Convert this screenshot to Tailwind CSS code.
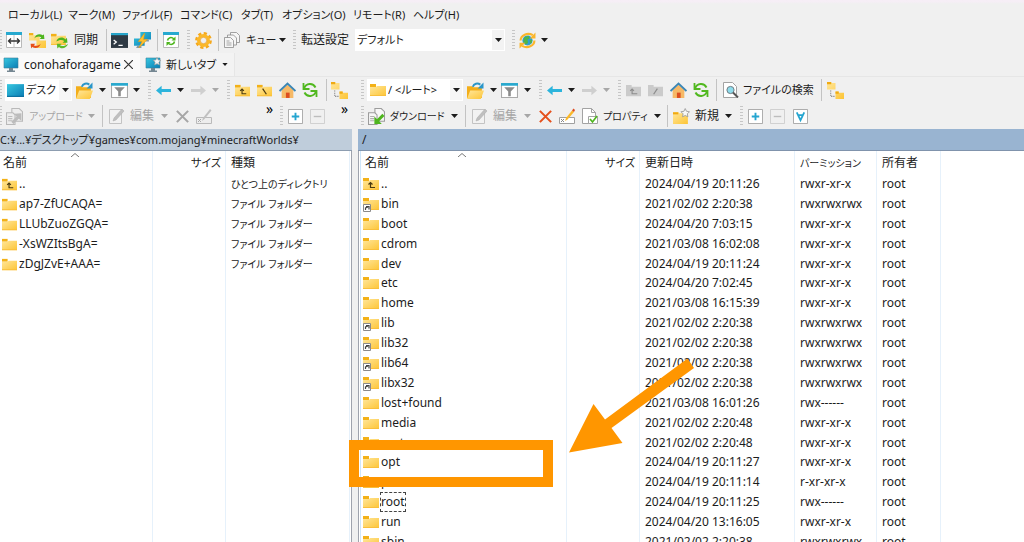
<!DOCTYPE html>
<html lang="ja">
<head>
<meta charset="utf-8">
<title>conohaforagame - WinSCP</title>
<script src="https://cdn.jsdelivr.net/npm/@tailwindcss/browser@4"></script>
</head>
<body class="h-screen overflow-hidden bg-[#f0f0f0] font-['Noto_Sans','Noto_Sans_CJK_JP',sans-serif] text-[12px] leading-[18px] text-[#1c1c1c] [font-feature-settings:'palt']">
<svg class="absolute size-0" aria-hidden="true">
  <linearGradient id="gold" x1="0" y1="0" x2="1" y2="1"><stop offset="0" stop-color="#ffe69a"/><stop offset="1" stop-color="#fdc536"/></linearGradient>
  <linearGradient id="screen" x1="0" y1="0" x2="1" y2="1"><stop offset="0" stop-color="#37c8e0"/><stop offset="1" stop-color="#0b7cb4"/></linearGradient>
  <symbol id="folder" viewBox="0 0 16 16"><path d="M0 2h6v3H0z" fill="#f3b117"/><path d="M0 5h6l1-1h9v10H0z" fill="url(#gold)"/><path d="M0 13h16v1H0z" fill="#f9bf3c"/></symbol>
  <symbol id="folder-up" viewBox="0 0 16 16"><use href="#folder"/><path d="M7.500 7v4.500H12M5.500 8.500l2-2 2 2" fill="none" stroke="#4a3a10" stroke-width="1.200"/></symbol>
  <symbol id="folder-root" viewBox="0 0 16 16"><use href="#folder"/><path d="M6 6l4 6" stroke="#4a3a10" stroke-width="1.300"/></symbol>
  <symbol id="folder-link" viewBox="0 0 16 16"><use href="#folder"/><path d="M.5 8.500h7v7h-7z" fill="#fff" stroke="#8a8a8a"/><path d="M2.500 14v-2l2.500-1M3 10.500h3v3" fill="none" stroke="#444" stroke-width="1.200"/></symbol>
  <symbol id="folder-up-off" viewBox="0 0 16 16"><path d="M0 2h6v2h10v10H0z" fill="#cbcbcb"/><path d="M6.500 7v4.500H12M4.500 8.500l2-2 2 2" fill="none" stroke="#8c8c8c" stroke-width="1.200"/></symbol>
  <symbol id="folder-root-off" viewBox="0 0 16 16"><path d="M0 2h6v2h10v10H0z" fill="#cbcbcb"/><path d="M10 6l-4 6" stroke="#8c8c8c" stroke-width="1.300"/></symbol>
  <symbol id="panels" viewBox="0 0 16 16"><path d="M.5.500h15v15H.5z" fill="#fff" stroke="#b9b9b9"/><path d="M0 0h16v3H0z" fill="#27a9cf"/><path d="M8 3v13" stroke="#c4c4c4"/><path d="M2.500 9h11M5 6.500L2.500 9 5 11.500M11 6.500L13.500 9 11 11.500" fill="none" stroke="#333" stroke-width="1.300"/></symbol>
  <symbol id="compare" viewBox="0 0 16 16"><path d="M0 1h4v2h6v5H0zM7 8h9v7H7z" fill="url(#gold)"/><path d="M0 1h4v2H0z" fill="#f3b117"/><path d="M5 6c1-4 5-5 8-3l1-1 .5 4.500H10l1.500-1.500C9 3.500 7 4.500 5 6z" fill="#4eb51e"/><path d="M11 11c-1 4-5 5-8 3l-1 1.500L1.500 11H6l-1.500 1.500c2 1 4.500.5 6.500-1.500z" fill="#e64f19"/></symbol>
  <symbol id="sync" viewBox="0 0 16 16"><use href="#folder" width="14" height="14"/><path d="M5 9c1-4 6-5 8.500-2L15 5.500 15.500 10H11l1.500-1.500C10.500 7 8 7 5 9z" fill="#4eb51e"/><path d="M16 11c-1 4-6 5.500-8.500 3L6 15.500 5.500 11H10l-1.500 1.500c2 1.500 5 .5 7.500-1.500z" fill="#5dbb2b"/></symbol>
  <symbol id="terminal" viewBox="0 0 16 16"><path d="M0 1h16v14H0z" fill="#2f3a44"/><path d="M0 1h16v2H0z" fill="#27a9cf"/><path d="M2.500 7.500L5 9.500l-2.500 2M7 12.500h4" fill="none" stroke="#fff" stroke-width="1.200"/></symbol>
  <symbol id="putty" viewBox="0 0 16 16"><path d="M6 0h10v7H6zM0 6h10v7H0z" fill="url(#screen)"/><path d="M9 7h5v2H9zM3 13h4v2H2z" fill="#8299a6"/><path d="M10 1L4 9h3.500L4.500 15 12.500 7H9z" fill="#ffc02e" stroke="#e79c0b" stroke-width=".5"/></symbol>
  <symbol id="refresh-win" viewBox="0 0 16 16"><path d="M.5.500h15v15H.5z" fill="#fff" stroke="#b9b9b9"/><path d="M0 0h16v3H0z" fill="#27a9cf"/><path d="M4.500 8.500c.5-3 4-4 6.500-1.500M11.500 9.500c-.5 3-4 4-6.500 1.500" fill="none" stroke="#4eb51e" stroke-width="1.600"/><path d="M12.500 4.500v4h-4zM3.500 14v-4h4z" fill="#4eb51e"/></symbol>
  <symbol id="gear" viewBox="0 0 16 16"><circle cx="8" cy="8" r="6.700" fill="none" stroke="#f5a81c" stroke-width="2.400" stroke-dasharray="3 2.260"/><circle cx="8" cy="8" r="4.600" fill="#f0f0f0" stroke="#fbb829" stroke-width="3"/><circle cx="8" cy="8" r="3" fill="none" stroke="#e9991a" stroke-width=".6"/></symbol>
  <symbol id="queue" viewBox="0 0 16 16"><g fill="#f6f6f6" stroke="#8b8b8b" stroke-width=".8"><path d="M6.500.500h6l3 3v7h-9z"/><path d="M3.500 3h6l3 3v7h-9z"/><path d="M.5 5.500h6l3 3v7h-9z"/></g><path d="M2.500 9h3M2.500 11h5M2.500 13h5" stroke="#a5a5a5"/></symbol>
  <symbol id="globe" viewBox="0 0 16 16"><circle cx="8" cy="8" r="4.800" fill="#2d9fd3"/><path d="M5 5l4-1.500 1 2.500-2 1 .5 3-2 2L4 9zM10 8l2.500-1-.5 3-1.500 1z" fill="#51b548"/><path d="M1.500 8C1.500 3 8 0 13 3M14.500 8c0 5-6.500 8-11.500 5" fill="none" stroke="#fbb62c" stroke-width="2"/><path d="M15.500.500V6H10zM.5 15.500V10H6z" fill="#fbb62c"/></symbol>
  <symbol id="monitor" viewBox="0 0 16 16"><path d="M1 1h14v10H1z" fill="url(#screen)" stroke="#3b7f9c" stroke-width=".6"/><path d="M6 11h4v2.500h2V15H4v-1.500h2z" fill="#758792"/></symbol>
  <symbol id="monitor-new" viewBox="0 0 16 16"><use href="#monitor"/><path d="M12 .5l1.200 2.400 2.600.4-1.900 1.900.5 2.700L12 6.700 9.600 7.900l.5-2.700-1.900-1.900 2.600-.4z" fill="#f5f5f5" stroke="#9a9a9a" stroke-width=".7"/></symbol>
  <symbol id="desktop" viewBox="0 0 16 16"><path d="M0 2h16v12H0z" fill="url(#screen)"/><path d="M0 13h16v1H0z" fill="#0a6c9b"/></symbol>
  <symbol id="open" viewBox="0 0 16 16"><path d="M0 4h5l1 1h8v10H0z" fill="#f3ae1a"/><path d="M3 8h13l-3 8H0z" fill="url(#gold)"/><path d="M5.500 4.500C6.500 1.500 10 .5 12.500 2.500" fill="none" stroke="#2a96c9" stroke-width="1.900"/><path d="M15.500.500v5.500H10z" fill="#2a96c9"/></symbol>
  <symbol id="filter" viewBox="0 0 16 16"><path d="M.5 1.500h15v13H.5z" fill="#fff" stroke="#a9a9a9"/><path d="M0 1h16v2.500H0z" fill="#27a9cf"/><path d="M3 5h10L9.200 9v4.500H6.800V9z" fill="#8b8b8b"/></symbol>
  <symbol id="back" viewBox="0 0 16 16"><path d="M0 8l6-5v3.500h10v3H6V13z" fill="#2cb4dc"/></symbol>
  <symbol id="forward" viewBox="0 0 16 16"><path d="M16 8l-6-5v3.500H0v3h10V13z" fill="#cfcfcf"/></symbol>
  <symbol id="home" viewBox="0 0 16 16"><path d="M2.500 7.500L8 2.500l5.500 5V15h-11z" fill="#f6b967"/><path d="M6.500 10h3.500v5H6.500z" fill="#dc4d20"/><path d="M.5 8.500L8 1.500l7.500 7" fill="none" stroke="#3b86b5" stroke-width="1.800"/></symbol>
  <symbol id="refresh" viewBox="0 0 16 16"><path d="M2 6.500C4 1 11 .5 13.500 5.500M14 9.500C12 15 5 15.500 2.500 10.500" fill="none" stroke="#51b81f" stroke-width="1.900"/><path d="M1.500 1v6h6M14.500 15V9h-6" fill="none" stroke="#51b81f" stroke-width="1.800"/></symbol>
  <symbol id="tree" viewBox="0 0 16 16"><path d="M0 0h4v1h4v6H0zM8 9h3v1h5v6H8z" fill="url(#gold)"/><path d="M0 0h4v2H0zM8 9h3v2H8z" fill="#f0aa12"/><path d="M3.500 8v5.500H8" fill="none" stroke="#777" stroke-dasharray="1 1"/></symbol>
  <symbol id="upload" viewBox="0 0 16 16"><g fill="#ededed" stroke="#b9b9b9"><path d="M5.500.500h7l3 3v9h-10z"/><path d="M.5 4.500h6l2 2v9h-8z"/></g><path d="M2 8h4M2 10h4M2 12h4" stroke="#bdbdbd"/><path d="M14.500 5v7l-2.500-2-5 5-2-2 5-5-2.500-2.500z" fill="#bcbcbc"/></symbol>
  <symbol id="download" viewBox="0 0 16 16"><g fill="#f7f7f7" stroke="#9c9c9c"><path d="M6.500.500h6l3 3v9h-9z"/><path d="M.5 4.500h6l2 2v9h-8z"/></g><path d="M2 8h4M2 10h4M2 12h4" stroke="#b0b0b0"/><path d="M6 15V8l2.500 2.500 5-5 2 2-5 5L13 15z" fill="#4eb51e"/></symbol>
  <symbol id="edit" viewBox="0 0 16 16"><path d="M.5 1.500h12v14H.5z" fill="#f2f2f2" stroke="#c3c3c3"/><path d="M4 13l1-3 8-9 2 2-8 9z" fill="#bfbfbf" stroke="#aaa" stroke-width=".5"/></symbol>
  <symbol id="cross" viewBox="0 0 16 16"><path d="M2 2l12 12M14 2L2 14" stroke="currentColor" stroke-width="2.200"/></symbol>
  <symbol id="rename-off" viewBox="0 0 16 16"><path d="M.5 9.500h15v6H.5z" fill="#ededed" stroke="#bababa"/><path d="M2 11l3 3m0-3l-3 3" stroke="#aaa"/><path d="M6 13l1-3 7-9 1.500 1.500-7 8.500z" fill="#c0c0c0"/></symbol>
  <symbol id="rename" viewBox="0 0 16 16"><path d="M.5 9.500h15v6H.5z" fill="#fff" stroke="#a0a0a0"/><path d="M2 11l3 3m0-3l-3 3" stroke="#888"/><path d="M6 13l1-3 6-7.500L15 4l-6.500 7.500z" fill="#fbb829"/><path d="M13 2.500L14.500 .5 16 2l-1 2z" fill="#dd4b20"/></symbol>
  <symbol id="props" viewBox="0 0 16 16"><path d="M.5.500h9l4 4v11H.5z" fill="#fff" stroke="#a3a3a3"/><path d="M9.500.500v4h4" fill="none" stroke="#a3a3a3"/><path d="M6.500 8.500h9v7h-9z" fill="#fff" stroke="#a3a3a3"/><path d="M8 11l2.500 3L15 8" fill="none" stroke="#4eb51e" stroke-width="1.700"/></symbol>
  <symbol id="new" viewBox="0 0 16 16"><path d="M0 4h5l1 1h8v10H0z" fill="url(#gold)"/><path d="M0 4h5v2H0z" fill="#f0aa12"/><path d="M11.500.500l1.200 2.600 2.800.4-2 2 .5 2.800-2.500-1.300L9 8.300l.5-2.800-2-2 2.800-.4z" fill="#f7f7f7" stroke="#999" stroke-width=".8"/></symbol>
  <symbol id="search" viewBox="0 0 16 16"><path d="M.5.500h9l4 4v11H.5z" fill="#fff" stroke="#a3a3a3"/><circle cx="7.500" cy="8" r="3.600" fill="#8edcec" stroke="#6f7d84"/><path d="M10 10.500l5 5" stroke="#555" stroke-width="2"/></symbol>
  <symbol id="plus" viewBox="0 0 16 16"><path d="M.5.500h15v15H.5z" fill="#fff" stroke="#a5a5a5"/><path d="M8 4v8M4 8h8" stroke="#25a5d0" stroke-width="2"/></symbol>
  <symbol id="minus" viewBox="0 0 16 16"><path d="M.5.500h15v15H.5z" fill="#f0f0f0" stroke="#cdcdcd"/><path d="M4 8h8" stroke="#bdbdbd" stroke-width="1.500"/></symbol>
  <symbol id="select-filter" viewBox="0 0 16 16"><path d="M.5.500h15v15H.5z" fill="#fff" stroke="#a5a5a5"/><path d="M4 3.500L8 12l4-8.500M5.500 6.500h5" fill="none" stroke="#25a5d0" stroke-width="1.900"/></symbol>
  <symbol id="arrow" viewBox="0 0 7 4"><path d="M0 0h7L3.500 4z" fill="currentColor"/></symbol>
</svg>

<div class="relative flex h-full flex-col">
  <nav class="flex h-[27px] shrink-0 items-center bg-linear-to-b from-[#f6eef6] from-5% to-[#f0f0f0] to-15% pt-[3px] pl-2 text-[11px] whitespace-nowrap" aria-label="メニュー">
    <button class="w-[60px] text-left">ローカル(L)</button>
    <button class="w-[54px] text-left">マーク(M)</button>
    <button class="w-[58px] text-left">ファイル(F)</button>
    <button class="w-[61px] text-left">コマンド(C)</button>
    <button class="w-[41px] text-left">タブ(T)</button>
    <button class="w-[71px] text-left">オプション(O)</button>
    <button class="w-[60px] text-left">リモート(R)</button>
    <button class="text-left">ヘルプ(H)</button>
  </nav>

  <div class="flex h-[26px] shrink-0 items-center whitespace-nowrap" role="toolbar" aria-label="メイン">
    <span class="w-[6px]"><i class="block h-5 w-[2px] bg-[repeating-linear-gradient(#c6c6c6_0_1px,transparent_1px_3px)]"></i></span>
    <button class="w-[23px]" aria-label="パネル"><svg class="size-4"><use href="#panels"/></svg></button>
    <button class="w-[22px]" aria-label="比較"><svg class="size-[17px]"><use href="#compare"/></svg></button>
    <button class="flex w-[55px] items-center gap-[6px]"><svg class="size-[17px]"><use href="#sync"/></svg>同期</button>
    <span class="h-[22px] w-[5px] border-l border-[#c3c3c3]"></span>
    <button class="w-[23px]" aria-label="端末"><svg class="size-[17px]"><use href="#terminal"/></svg></button>
    <button class="w-[23px]" aria-label="PuTTY"><svg class="size-[17px]"><use href="#putty"/></svg></button>
    <span class="h-[22px] w-[6px] border-l border-[#c3c3c3]"></span>
    <button class="w-[24px]" aria-label="更新"><svg class="size-4"><use href="#refresh-win"/></svg></button>
    <span class="w-[8px]"><i class="block h-5 w-[3px] bg-[repeating-linear-gradient(#c6c6c6_0_1px,transparent_1px_3px)]"></i></span>
    <button class="w-[23px]" aria-label="環境設定"><svg class="size-[17px]"><use href="#gear"/></svg></button>
    <span class="h-[22px] w-[6px] border-l border-[#c3c3c3]"></span>
    <button class="flex w-[69px] items-center text-[11px]"><svg class="mr-[6px] size-4"><use href="#queue"/></svg>キュー<svg class="mr-[7px] ml-auto h-1 w-[7px]"><use href="#arrow"/></svg></button>
    <span class="w-[8px]"><i class="block h-5 w-[3px] bg-[repeating-linear-gradient(#c6c6c6_0_1px,transparent_1px_3px)]"></i></span>
    <label class="w-[54px]" for="preset">転送設定</label>
    <div class="relative mr-[7px] flex h-[22px] w-[150px] items-center bg-white">
      <select id="preset" class="h-full w-full appearance-none pl-[2px] text-[11px] outline-none"><option>デフォルト</option></select>
      <span class="pointer-events-none absolute inset-y-px right-px flex w-[12px] items-center justify-center bg-[#f3f3f3]"><svg class="h-1 w-[7px]"><use href="#arrow"/></svg></span>
    </div>
    <span class="w-[7px]"><i class="block h-5 w-[3px] bg-[repeating-linear-gradient(#c6c6c6_0_1px,transparent_1px_3px)]"></i></span>
    <button class="flex items-center gap-[5px]" aria-label="同期ブラウズ"><svg class="size-[17px]"><use href="#globe"/></svg><svg class="h-1 w-[7px]"><use href="#arrow"/></svg></button>
  </div>

  <div class="flex h-[24px] shrink-0 items-stretch border-b border-[#e6e6e6] whitespace-nowrap" role="tablist">
    <button class="flex w-[140px] items-center bg-[#fafafa] pl-[3px]" role="tab" aria-selected="true"><svg class="mr-[5px] size-4"><use href="#monitor"/></svg>conohaforagame<svg class="ml-auto mr-[7px] size-[9px]" viewBox="0 0 9 9"><path d="M0 0l9 9M9 0L0 9" stroke="#333" stroke-width="1.200"/></svg></button>
    <button class="flex w-[95px] items-center border-r border-[#e6e6e6] bg-[#f3f3f3] pl-[5px]" role="tab"><svg class="mr-[5px] size-4"><use href="#monitor-new"/></svg><span class="text-[11px]">新しいタブ</span><svg class="ml-auto mr-[6px] h-[3px] w-[6px]"><use href="#arrow"/></svg></button>
  </div>

  <main class="grid min-h-0 flex-1 grid-cols-[352fr_6px_666fr]">
    <section class="flex min-h-0 min-w-0 flex-col overflow-hidden" aria-label="ローカル">
      <div class="flex h-[26px] shrink-0 items-center whitespace-nowrap" role="toolbar">
        <span class="w-[5px]"><i class="block h-5 w-[2px] bg-[repeating-linear-gradient(#c6c6c6_0_1px,transparent_1px_3px)]"></i></span>
        <div class="relative mr-1 flex h-[22px] w-[67px] items-center bg-white pl-[2px]">
          <svg class="size-[17px] shrink-0"><use href="#desktop"/></svg>
          <select class="h-full min-w-0 flex-1 appearance-none pl-[2px] text-[11px] outline-none" aria-label="ローカルの場所"><option>デスク</option></select>
          <span class="pointer-events-none absolute inset-y-px right-px flex w-[12px] items-center justify-center bg-[#f6f6f6]"><svg class="h-1 w-[7px]"><use href="#arrow"/></svg></span>
        </div>
        <button class="flex w-[35px] items-center gap-[6px]" aria-label="開く"><svg class="size-[17px]"><use href="#open"/></svg><svg class="h-1 w-[7px]"><use href="#arrow"/></svg></button>
        <button class="flex w-[37px] items-center gap-[5px]" aria-label="フィルタ"><svg class="size-[17px]"><use href="#filter"/></svg><svg class="h-1 w-[7px]"><use href="#arrow"/></svg></button>
        <span class="w-[8px]"><i class="block h-5 w-[3px] bg-[repeating-linear-gradient(#c6c6c6_0_1px,transparent_1px_3px)]"></i></span>
        <button class="flex w-[35px] items-center gap-[6px]" aria-label="戻る"><svg class="size-[15px]"><use href="#back"/></svg><svg class="h-1 w-[7px]"><use href="#arrow"/></svg></button>
        <button class="flex w-[36px] items-center gap-[6px] text-[#a8a8a8]" aria-label="進む" disabled><svg class="size-[15px]"><use href="#forward"/></svg><svg class="h-1 w-[7px]"><use href="#arrow"/></svg></button>
        <span class="w-[8px]"><i class="block h-5 w-[3px] bg-[repeating-linear-gradient(#c6c6c6_0_1px,transparent_1px_3px)]"></i></span>
        <button class="w-[22px]" aria-label="上へ"><svg class="size-[15px]"><use href="#folder-up"/></svg></button>
        <button class="w-[22px]" aria-label="ルート"><svg class="size-[15px]"><use href="#folder-root"/></svg></button>
        <button class="w-[23px]" aria-label="ホーム"><svg class="size-[17px]"><use href="#home"/></svg></button>
        <button class="w-[24px]" aria-label="更新"><svg class="size-4"><use href="#refresh"/></svg></button>
        <span class="h-[22px] w-[5px] border-l border-[#c3c3c3]"></span>
        <button aria-label="ツリー"><svg class="size-[17px]"><use href="#tree"/></svg></button>
      </div>
      <div class="flex h-[26px] shrink-0 items-center whitespace-nowrap text-[#a6a6a6]" role="toolbar">
        <span class="w-[6px]"><i class="block h-5 w-[2px] bg-[repeating-linear-gradient(#c6c6c6_0_1px,transparent_1px_3px)]"></i></span>
        <button class="flex w-[96px] items-center text-[10px]" disabled><svg class="mr-[6px] size-[17px]"><use href="#upload"/></svg>アップロード<svg class="mr-[7px] ml-auto h-1 w-[7px]"><use href="#arrow"/></svg></button>
        <span class="h-[22px] w-[7px] border-l border-[#c3c3c3]"></span>
        <button class="flex w-[66px] items-center" disabled><svg class="mr-[5px] size-4"><use href="#edit"/></svg>編集<svg class="mr-[7px] ml-auto h-1 w-[7px]"><use href="#arrow"/></svg></button>
        <button class="w-[21px]" aria-label="削除" disabled><svg class="size-[15px]"><use href="#cross"/></svg></button>
        <button class="w-[70px]" aria-label="名前の変更" disabled><svg class="size-4"><use href="#rename-off"/></svg></button>
        <button class="w-[14px] pb-[14px] text-left text-[14px] leading-3 text-black" aria-label="その他">»</button>
        <span class="w-[8px]"><i class="block h-5 w-[3px] bg-[repeating-linear-gradient(#c6c6c6_0_1px,transparent_1px_3px)]"></i></span>
        <button class="w-[22px]" aria-label="選択"><svg class="size-[15px]"><use href="#plus"/></svg></button>
        <button class="w-[31px]" aria-label="選択解除" disabled><svg class="size-[15px]"><use href="#minus"/></svg></button>
        <button class="pb-[14px] text-[14px] leading-3 text-black" aria-label="その他">»</button>
      </div>
      <div class="h-[22px] shrink-0 border-b border-[#8d9db0] bg-[#bfcddb] pt-[2px] text-[11px] whitespace-nowrap">C:¥...¥デスクトップ¥games¥com.mojang¥minecraftWorlds¥</div>
      <div class="min-h-0 flex-1 overflow-hidden border-r border-[#9fa3ad] bg-white bg-[linear-gradient(90deg,transparent_152px,#e6f1fb_152px_153px,transparent_153px_225px,#e6f1fb_225px_226px,transparent_226px_349px,#e6f1fb_349px_350px,transparent_350px)]">
        <table class="h-[123px] w-full table-fixed border-collapse whitespace-nowrap">
          <colgroup><col class="w-[153px]"><col class="w-[73px]"><col></colgroup>
          <thead><tr class="h-[23px]">
            <th class="relative p-0 pl-[3px] text-left font-normal">名前<svg class="absolute top-[2px] left-[71px] h-1 w-[8px]" viewBox="0 0 8 4"><path d="M0 4l4-3.500L8 4" fill="none" stroke="#777"/></svg></th>
            <th class="p-0 pr-[5px] text-right text-[11px] font-normal">サイズ</th>
            <th class="p-0 pl-[5px] text-left font-normal">種類</th>
          </tr></thead>
          <tbody id="local"></tbody>
        </table>
      </div>
    </section>

    <div></div>

    <section class="flex min-h-0 min-w-0 flex-col overflow-hidden" aria-label="リモート">
      <div class="flex h-[26px] shrink-0 items-center pl-[3px] whitespace-nowrap" role="toolbar">
        <span class="w-[6px]"><i class="block h-5 w-[3px] bg-[repeating-linear-gradient(#c6c6c6_0_1px,transparent_1px_3px)]"></i></span>
        <div class="relative mr-1 flex h-[22px] w-[96px] items-center bg-white pl-[3px]">
          <svg class="size-4 shrink-0"><use href="#folder"/></svg>
          <select class="h-full min-w-0 flex-1 appearance-none pl-[2px] text-[11px] outline-none" aria-label="リモートの場所"><option>/ &lt;ルート&gt;</option></select>
          <span class="pointer-events-none absolute inset-y-px right-px flex w-[12px] items-center justify-center bg-[#f6f6f6]"><svg class="h-1 w-[7px]"><use href="#arrow"/></svg></span>
        </div>
        <button class="flex w-[34px] items-center gap-[6px]" aria-label="開く"><svg class="size-[17px]"><use href="#open"/></svg><svg class="h-1 w-[7px]"><use href="#arrow"/></svg></button>
        <button class="flex w-[38px] items-center gap-[6px]" aria-label="フィルタ"><svg class="size-[17px]"><use href="#filter"/></svg><svg class="h-1 w-[7px]"><use href="#arrow"/></svg></button>
        <span class="w-[8px]"><i class="block h-5 w-[3px] bg-[repeating-linear-gradient(#c6c6c6_0_1px,transparent_1px_3px)]"></i></span>
        <button class="flex w-[35px] items-center gap-[6px]" aria-label="戻る"><svg class="size-[15px]"><use href="#back"/></svg><svg class="h-1 w-[7px]"><use href="#arrow"/></svg></button>
        <button class="flex w-[36px] items-center gap-[6px] text-[#a8a8a8]" aria-label="進む" disabled><svg class="size-[15px]"><use href="#forward"/></svg><svg class="h-1 w-[7px]"><use href="#arrow"/></svg></button>
        <span class="w-[8px]"><i class="block h-5 w-[3px] bg-[repeating-linear-gradient(#c6c6c6_0_1px,transparent_1px_3px)]"></i></span>
        <button class="w-[22px]" aria-label="上へ" disabled><svg class="size-[15px]"><use href="#folder-up-off"/></svg></button>
        <button class="w-[22px]" aria-label="ルート" disabled><svg class="size-[15px]"><use href="#folder-root-off"/></svg></button>
        <button class="w-[23px]" aria-label="ホーム"><svg class="size-[17px]"><use href="#home"/></svg></button>
        <button class="w-[23px]" aria-label="更新"><svg class="size-4"><use href="#refresh"/></svg></button>
        <span class="h-[22px] w-[7px] border-l border-[#c3c3c3]"></span>
        <button class="flex w-[98px] items-center text-[11px]"><svg class="mr-[4px] size-4"><use href="#search"/></svg>ファイルの検索</button>
        <span class="h-[22px] w-[6px] border-l border-[#c3c3c3]"></span>
        <button aria-label="ツリー"><svg class="size-[17px]"><use href="#tree"/></svg></button>
      </div>
      <div class="flex h-[26px] shrink-0 items-center pl-[3px] whitespace-nowrap" role="toolbar">
        <span class="w-[7px]"><i class="block h-5 w-[3px] bg-[repeating-linear-gradient(#c6c6c6_0_1px,transparent_1px_3px)]"></i></span>
        <button class="flex w-[97px] items-center text-[10px]"><svg class="mr-[5px] size-[17px]"><use href="#download"/></svg>ダウンロード<svg class="mr-[7px] ml-auto h-1 w-[7px]"><use href="#arrow"/></svg></button>
        <span class="h-[22px] w-[7px] border-l border-[#c3c3c3]"></span>
        <button class="flex w-[66px] items-center text-[#a6a6a6]" disabled><svg class="mr-[5px] size-4"><use href="#edit"/></svg>編集<svg class="mr-[7px] ml-auto h-1 w-[7px]"><use href="#arrow"/></svg></button>
        <button class="w-[21px] text-[#e5501c]" aria-label="削除"><svg class="size-[15px]"><use href="#cross"/></svg></button>
        <button class="w-[23px]" aria-label="名前の変更"><svg class="size-4"><use href="#rename"/></svg></button>
        <button class="flex w-[85px] items-center text-[10px]"><svg class="mr-[5px] size-4"><use href="#props"/></svg>プロパティ<svg class="mr-[6px] ml-auto h-1 w-[7px]"><use href="#arrow"/></svg></button>
        <span class="h-[22px] w-[6px] border-l border-[#c3c3c3]"></span>
        <button class="flex w-[67px] items-center"><svg class="mr-[5px] size-[17px]"><use href="#new"/></svg>新規<svg class="mr-[8px] ml-auto h-1 w-[7px]"><use href="#arrow"/></svg></button>
        <span class="w-[8px]"><i class="block h-5 w-[3px] bg-[repeating-linear-gradient(#c6c6c6_0_1px,transparent_1px_3px)]"></i></span>
        <button class="w-[22px]" aria-label="選択"><svg class="size-[15px]"><use href="#plus"/></svg></button>
        <button class="w-[23px]" aria-label="選択解除" disabled><svg class="size-[15px]"><use href="#minus"/></svg></button>
        <button aria-label="フィルタ選択"><svg class="size-[15px]"><use href="#select-filter"/></svg></button>
      </div>
      <div class="h-[22px] shrink-0 border-b border-[#8093ac] bg-[#99b4d1] pt-[2px] pl-[4px]">/</div>
      <div class="min-h-0 flex-1 overflow-hidden border-l border-[#9fa3ad] bg-white bg-[linear-gradient(90deg,transparent_1px,#cfe6fa_1px_2px,transparent_2px_207px,#e6f1fb_207px_208px,transparent_208px_280px,#e6f1fb_280px_281px,transparent_281px_435px,#e6f1fb_435px_436px,transparent_436px_517px,#e6f1fb_517px_518px,transparent_518px_581px,#e6f1fb_581px_582px,transparent_582px)]">
        <table class="h-[401px] w-full table-fixed border-collapse whitespace-nowrap">
          <colgroup><col class="w-[208px]"><col class="w-[73px]"><col class="w-[155px]"><col class="w-[82px]"><col></colgroup>
          <thead><tr class="h-[23px]">
            <th class="relative p-0 pl-[6px] text-left font-normal">名前<svg class="absolute top-[2px] left-[99px] h-1 w-[8px]" viewBox="0 0 8 4"><path d="M0 4l4-3.500L8 4" fill="none" stroke="#777"/></svg></th>
            <th class="p-0 pr-[5px] text-right text-[11px] font-normal">サイズ</th>
            <th class="p-0 pl-[5px] text-left font-normal">更新日時</th>
            <th class="p-0 pl-[5px] text-left text-[10px] font-normal">パーミッション</th>
            <th class="p-0 pl-[5px] text-left font-normal">所有者</th>
          </tr></thead>
          <tbody id="remote"></tbody>
        </table>
      </div>
    </section>
  </main>

  <div class="pointer-events-none absolute top-[440px] left-[349px] h-[47px] w-[204px] border-[10px] border-[#ff9600]"></div>
  <svg class="pointer-events-none absolute top-[356px] left-[566px] h-[100px] w-[132px]" viewBox="566 356 132 100" aria-hidden="true"><path d="M569 452.500L593.500 404 605 419.500 687.500 358.500 694 368 611.500 428 622.500 443z" fill="#ff9600"/></svg>
</div>

<script>
const local = [
  ['..', 'ひとつ上のディレクトリ', '#folder-up'],
  ['ap7-ZfUCAQA=', 'ファイル フォルダー', '#folder'],
  ['LLUbZuoZGQA=', 'ファイル フォルダー', '#folder'],
  ['-XsWZItsBgA=', 'ファイル フォルダー', '#folder'],
  ['zDgJZvE+AAA=', 'ファイル フォルダー', '#folder'],
];
const remote = [
  ['..', '2024/04/19 20:11:26', 'rwxr-xr-x', '#folder-up'],
  ['bin', '2021/02/02 2:20:38', 'rwxrwxrwx', '#folder-link'],
  ['boot', '2024/04/20 7:03:15', 'rwxr-xr-x', '#folder'],
  ['cdrom', '2021/03/08 16:02:08', 'rwxr-xr-x', '#folder'],
  ['dev', '2024/04/19 20:11:24', 'rwxr-xr-x', '#folder'],
  ['etc', '2024/04/20 7:02:45', 'rwxr-xr-x', '#folder'],
  ['home', '2021/03/08 16:15:39', 'rwxr-xr-x', '#folder'],
  ['lib', '2021/02/02 2:20:38', 'rwxrwxrwx', '#folder-link'],
  ['lib32', '2021/02/02 2:20:38', 'rwxrwxrwx', '#folder-link'],
  ['lib64', '2021/02/02 2:20:38', 'rwxrwxrwx', '#folder-link'],
  ['libx32', '2021/02/02 2:20:38', 'rwxrwxrwx', '#folder-link'],
  ['lost+found', '2021/03/08 16:01:26', 'rwx------', '#folder'],
  ['media', '2021/02/02 2:20:48', 'rwxr-xr-x', '#folder'],
  ['mnt', '2021/02/02 2:20:48', 'rwxr-xr-x', '#folder'],
  ['opt', '2024/04/19 20:11:27', 'rwxr-xr-x', '#folder'],
  ['proc', '2024/04/19 20:11:14', 'r-xr-xr-x', '#folder'],
  ['root', '2024/04/19 20:11:25', 'rwx------', '#folder'],
  ['run', '2024/04/20 13:16:05', 'rwxr-xr-x', '#folder'],
  ['sbin', '2021/02/02 2:20:38', 'rwxrwxrwx', '#folder-link'],
];
document.getElementById('local').innerHTML = local.map(([name, type, icon]) =>
  `<tr><td class="p-0 pl-[2px]"><div class="flex items-center gap-[2px]"><svg class="size-[15px] shrink-0"><use href="${icon}"/></svg>${name}</div></td><td class="p-0"></td><td class="p-0 pl-[5px] text-[10px]">${type}</td></tr>`).join('');
document.getElementById('remote').innerHTML = remote.map(([name, date, perm, icon]) =>
  `<tr><td class="p-0 pl-[4px]"><div class="flex items-center gap-[2px]"><svg class="size-4 shrink-0"><use href="${icon}"/></svg><span class="${name === 'root' ? 'outline-1 outline-dashed outline-[#444]' : ''}">${name}</span></div></td><td class="p-0"></td><td class="p-0 pl-[5px]">${date}</td><td class="p-0 pl-[5px]">${perm}</td><td class="p-0 pl-[5px]">root</td></tr>`).join('');
</script>
</body>
</html>
